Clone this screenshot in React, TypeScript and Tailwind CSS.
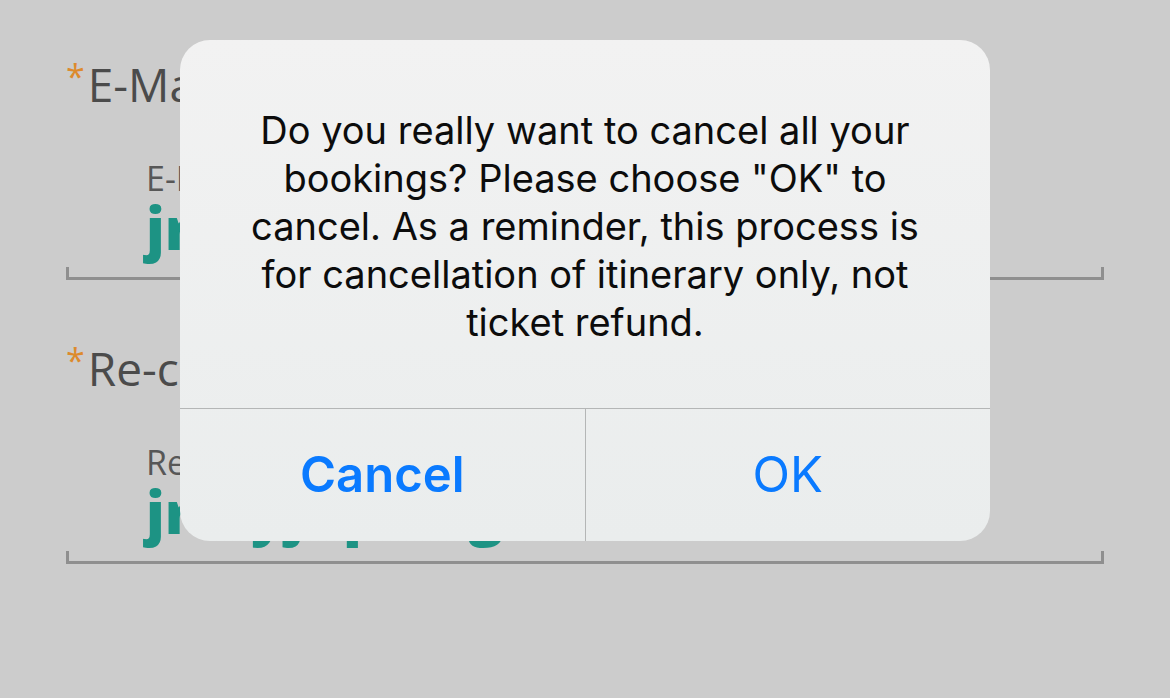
import React from "react";

function Field({ label, hint, value }: { label: string; hint: string; value: string }) {
  return (
    <div className="flex flex-col">
      <div className="flex items-start text-[46px] leading-[56px] text-[#4b4b4b]">
        <span className="text-[#dd8a2d] text-[34px] leading-[40px] mr-[3px]">*</span>
        <span>{label}</span>
      </div>
      <div className="pl-[80px] pt-[46px] flex flex-col">
        <span className="text-[34px] leading-[40px] text-[#575757]">{hint}</span>
        <span className="text-[58px] leading-[64px] font-extrabold text-[#1d9384] -mt-[2px]">{value}</span>
      </div>
      <div className="h-[13px] w-[1038px] border-x-[3px] border-b-[3px] border-[#8f8f8f] mt-[7px]" />
    </div>
  );
}

export default function App() {
  return (
    <div className="relative w-[1170px] h-[698px] overflow-hidden bg-[#cccccc] font-['Open_Sans',sans-serif]">
      <div className="flex flex-col gap-[60px] pl-[66px] pt-[56px]">
        <Field label="E-Mail Address" hint="E-Mail" value="jrmyjupe@gmail.com" />
        <Field label="Re-confirm E-Mail" hint="Re-confirm E-Mail" value="jrmyjupe@gmail.com" />
      </div>

      <div className="absolute left-[180px] top-[40px] w-[810px] h-[501px] rounded-[30px] overflow-hidden flex flex-col bg-linear-to-b from-[#f2f2f2] to-[#eaeded] font-['Inter',sans-serif]">
        <div className="h-[368px] flex items-center justify-center px-[40px] pt-[4px]">
          <p className="text-center text-[38px] leading-[48px] text-[#0c0c0c]">
            Do you really want to cancel all your
            <br />
            bookings? Please choose "OK" to
            <br />
            cancel. As a reminder, this process is
            <br />
            for cancellation of itinerary only, not
            <br />
            ticket refund.
          </p>
        </div>
        <div className="flex flex-1 border-t border-[#b4b6b6]">
          <button className="flex-1 flex items-center justify-center text-[49px] font-semibold text-[#0a7aff] border-r border-[#b4b6b6]">
            Cancel
          </button>
          <button className="flex-1 flex items-center justify-center text-[49px] text-[#0a7aff]">
            OK
          </button>
        </div>
      </div>
    </div>
  );
}
